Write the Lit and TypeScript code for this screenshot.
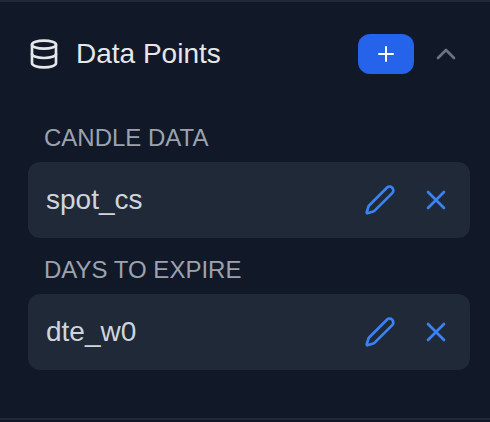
import { LitElement, html, css } from "lit";
import { customElement } from "lit/decorators.js";

@customElement("data-row")
class DataRow extends LitElement {
  static properties = { name: {} };
  name = "";
  static styles = css`
    :host { display: block; }
    .row {
      display: flex; align-items: center; height: 76px; box-sizing: border-box;
      padding: 0 18px 0 18px; background: #1f2937; border-radius: 12px;
    }
    .name { flex: 1; font-size: 28px; line-height: 36px; color: #d1d5db; }
    .acts { display: flex; align-items: center; gap: 24px; }
    svg { display: block; fill: none; stroke: #3b82f6; stroke-width: 2; stroke-linecap: round; stroke-linejoin: round; }
  `;
  render() {
    return html`<div class="row">
      <span class="name">${this.name}</span>
      <div class="acts">
        <svg width="32" height="32" viewBox="0 0 24 24"><path d="M21.17 6.81a2.82 2.82 0 0 0-3.99-3.99L3.84 16.17a2 2 0 0 0-.5.83l-1.32 4.35a.5.5 0 0 0 .62.62l4.35-1.32a2 2 0 0 0 .83-.5z"/></svg>
        <svg width="32" height="32" viewBox="0 0 24 24"><path d="M18 6 6 18M6 6l12 12"/></svg>
      </div>
    </div>`;
  }
}

@customElement("app-root")
class AppRoot extends LitElement {
  static styles = css`
    :host {
      display: block; width: 490px; height: 422px; box-sizing: border-box;
      background: #111827; font-family: "Liberation Sans", Arial, sans-serif;
    }
    .panel {
      height: 420px; box-sizing: border-box; border-top: 2px solid #1f2937; border-bottom: 2px solid #1f2937;
      padding: 32px 20px 0 28px;
    }
    .head { display: flex; align-items: center; height: 40px; margin-right: 8px; }
    .db { display: block; margin-right: 16px; fill: none; stroke: #e5e7eb; stroke-width: 2; stroke-linecap: round; stroke-linejoin: round; }
    h2 { flex: 1; margin: 0; font-size: 28px; font-weight: 400; line-height: 36px; color: #e5e7eb; }
    .add {
      display: flex; align-items: center; justify-content: center; width: 56px; height: 40px;
      padding: 0; border: 0; border-radius: 12px; background: #2563eb;
    }
    .add svg { stroke: #fff; stroke-width: 2; stroke-linecap: round; fill: none; display: block; }
    .chev { display: block; margin-left: 16px; fill: none; stroke: #6b7280; stroke-width: 2; stroke-linecap: round; stroke-linejoin: round; }
    .list { display: flex; flex-direction: column; margin-top: 48px; }
    .label { font-size: 24px; line-height: 32px; color: #9ca3af; padding-left: 16px; margin-bottom: 8px; }
    data-row { margin-bottom: 16px; }
  `;
  render() {
    return html`<div class="panel">
      <div class="head">
        <svg class="db" width="32" height="32" viewBox="0 0 24 24"><ellipse cx="12" cy="5" rx="9" ry="3"/><path d="M3 5v14a9 3 0 0 0 18 0V5"/><path d="M3 12a9 3 0 0 0 18 0"/></svg>
        <h2>Data Points</h2>
        <button class="add"><svg width="24" height="24" viewBox="0 0 24 24"><path d="M5 12h14M12 5v14"/></svg></button>
        <svg class="chev" width="32" height="32" viewBox="0 0 24 24"><path d="m18 15-6-6-6 6"/></svg>
      </div>
      <div class="list">
        <div class="label">CANDLE DATA</div>
        <data-row name="spot_cs"></data-row>
        <div class="label">DAYS TO EXPIRE</div>
        <data-row name="dte_w0"></data-row>
      </div>
    </div>`;
  }
}
